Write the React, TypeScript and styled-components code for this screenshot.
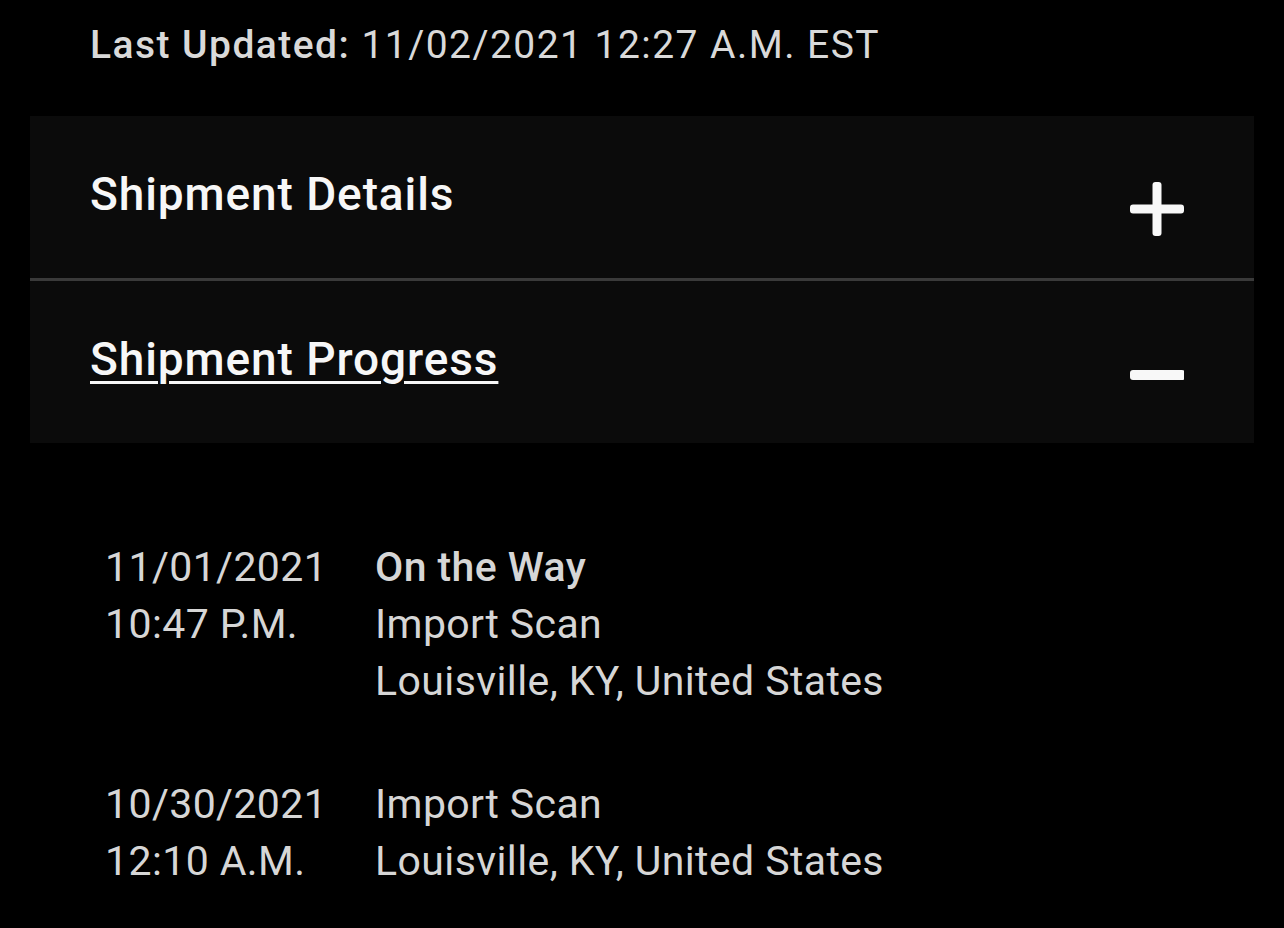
import styled, { createGlobalStyle } from "styled-components"

const Global = createGlobalStyle`
  html, body {
    margin: 0;
    padding: 0;
    background: #000;
  }
  body {
    font-family: Roboto, "Liberation Sans", sans-serif;
    -webkit-font-smoothing: antialiased;
  }
`

const Page = styled.div`
  width: 1284px;
  height: 928px;
  overflow: hidden;
  background: #000;
  padding: 20px 30px 0;
  box-sizing: border-box;
`

const Updated = styled.div`
  padding-left: 60px;
  font-size: 39px;
  line-height: 50px;
  color: #d9d9d9;
  letter-spacing: 1.45px;

  b {
    font-weight: 500;
  }
`

const Panel = styled.section`
  margin-top: 46px;
  background: #0b0b0b;
  display: flex;
  flex-direction: column;
`

const Divider = styled.div`
  height: 3px;
  background: #3a3a3a;
`

const Header = styled.div`
  height: 162px;
  display: flex;
  align-items: center;
  justify-content: space-between;
  padding: 0 70px 0 60px;
  box-sizing: border-box;
`

const Title = styled.h2<{ $open?: boolean }>`
  margin: 0 0 6px;
  font-size: 46px;
  font-weight: 500;
  letter-spacing: 0.9px;
  color: #f7f7f7;
  text-decoration: ${(p) => (p.$open ? "underline" : "none")};
  text-decoration-thickness: 3px;
  text-underline-offset: 6px;
`

const Toggle = styled.svg<{ $shift: number }>`
  width: 54px;
  height: 54px;
  margin-top: ${(p) => p.$shift}px;
`

const Timeline = styled.div`
  padding: 96px 0 0 75px;
  display: flex;
  flex-direction: column;
  gap: 66px;
`

const Entry = styled.div`
  display: grid;
  grid-template-columns: 270px 1fr;
  font-size: 41px;
  line-height: 57px;
  letter-spacing: 0.4px;
  color: #d6d6d6;
`

const Lines = styled.div`
  display: flex;
  flex-direction: column;
`

const Status = styled.span<{ $bold?: boolean }>`
  font-weight: ${(p) => (p.$bold ? 500 : 400)};
`

function PlusIcon() {
  return (
    <Toggle $shift={24} viewBox="0 0 54 54">
      <rect x="0" y="22.5" width="54" height="9" rx="3" fill="#f8f8f8" />
      <rect x="22.5" y="0" width="9" height="54" rx="3" fill="#f8f8f8" />
    </Toggle>
  )
}

function MinusIcon() {
  return (
    <Toggle $shift={26} viewBox="0 0 54 54">
      <rect x="0" y="22" width="55" height="10" rx="3" fill="#f8f8f8" />
    </Toggle>
  )
}

const events = [
  {
    date: "11/01/2021",
    time: "10:47 P.M.",
    lines: [
      { text: "On the Way", bold: true },
      { text: "Import Scan" },
      { text: "Louisville, KY, United States" },
    ],
  },
  {
    date: "10/30/2021",
    time: "12:10 A.M.",
    lines: [{ text: "Import Scan" }, { text: "Louisville, KY, United States" }],
  },
]

export default function App() {
  return (
    <Page>
      <Global />
      <Updated>
        <b>Last Updated:</b> 11/02/2021 12:27 A.M. EST
      </Updated>

      <Panel>
        <Header>
          <Title>Shipment Details</Title>
          <PlusIcon />
        </Header>
        <Divider />
        <Header>
          <Title $open>Shipment Progress</Title>
          <MinusIcon />
        </Header>
      </Panel>

      <Timeline>
        {events.map((ev) => (
          <Entry key={ev.date}>
            <Lines>
              <span>{ev.date}</span>
              <span>{ev.time}</span>
            </Lines>
            <Lines>
              {ev.lines.map((l) => (
                <Status key={l.text} $bold={l.bold}>
                  {l.text}
                </Status>
              ))}
            </Lines>
          </Entry>
        ))}
      </Timeline>
    </Page>
  )
}
